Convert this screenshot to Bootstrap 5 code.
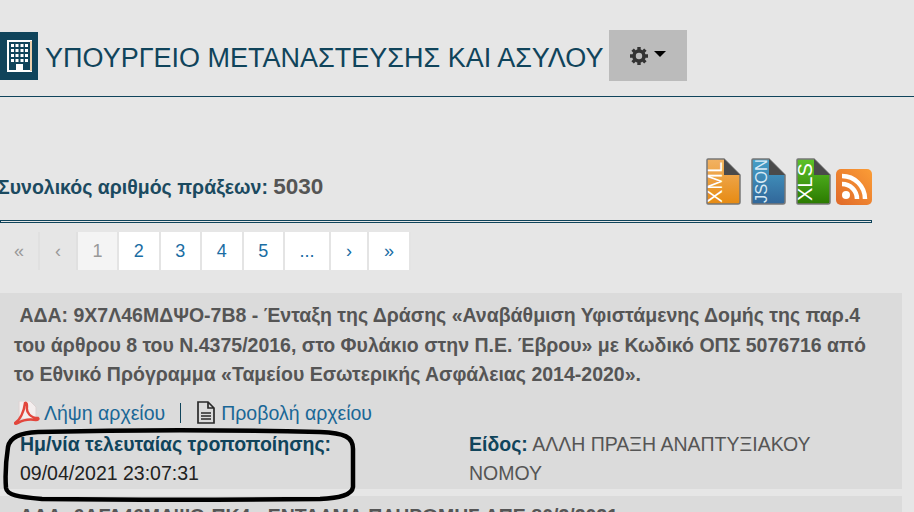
<!DOCTYPE html>
<html lang="el">

<head>
  <meta charset="UTF-8">
  <meta name="viewport" content="width=device-width, initial-scale=1.0">
  <title>Υπουργείο Μετανάστευσης και Ασύλου</title>
  <link href="https://cdn.jsdelivr.net/npm/bootstrap@5.3.0/dist/css/bootstrap.min.css" rel="stylesheet">
  <style>
    html, body {
      height: 512px;
      overflow: hidden;
    }

    body {
      background: #e6e6e6;
      font-family: "Liberation Sans", Arial, sans-serif;
      color: #555;
    }

    .site-head {
      height: 97px;
      padding-top: 32px;
      border-bottom: 1px solid #0f445c;
    }

    .logo-box {
      width: 38px;
      height: 48px;
      background: #10445b;
    }

    .site-title {
      color: #10445b;
      font-size: 27px;
      line-height: 52px;
      margin: 0 6px 0 7px;
      font-weight: 400;
      white-space: nowrap;
    }

    .gear-btn {
      width: 78px;
      height: 51px;
      margin-top: -2px;
      background: #bbb;
      gap: 6px;
    }

    .gear-caret {
      width: 0;
      height: 0;
      border-left: 6px solid transparent;
      border-right: 6px solid transparent;
      border-top: 6px solid #000;
      margin-top: -4px;
    }

    .stats-row {
      width: 872px;
      height: 123px;
      padding-bottom: 15px;
    }

    .stats-label {
      font-size: 19.500px;
      font-weight: 700;
      margin-left: -2px;
      margin-bottom: 6px;
      line-height: 24px;
      color: #1b4a60;
    }

    .stats-label b {
      color: #555;
      font-size: 22.500px;
    }

    .export-icons {
      gap: 10px;
    }

    .rss-icon {
      margin-left: -5px;
    }

    .stats-rule {
      width: 872px;
      height: 3px;
      border: 1px solid #10445b;
    }

    .pager {
      margin: 9px 0 0;
      padding: 0;
      list-style: none;
    }

    .pager .page-link {
      height: 38px;
      line-height: 38px;
      margin-left: 0;
      padding: 0;
      text-align: center;
      font-size: 18px;
      color: #1a6da3;
      background: #fff;
      border: 0;
      border-right: 2px solid #e4e4e4;
      border-radius: 0 !important;
    }

    .pager .page-item:not(:first-child) .page-link {
      margin-left: 0;
    }

    .pager .page-item.disabled .page-link {
      background: #e6e6e6;
      color: #999;
      border-right-color: #e0e0e0;
    }

    .pager .page-item.active .page-link {
      background: #f4f4f4;
      color: #999;
    }

    .pg-1 { width: 40px; }
    .pg-2 { width: 38px; }
    .pg-3 { width: 41.500px; }
    .pg-4 { width: 46px; }
    .pg-5 { width: 41px; }
    .pg-6 { width: 42px; }

    .act-card {
      width: 902px;
      margin-top: 23px;
      background: #dbdbdb;
      padding: 8px 0 0 14px;
      height: 196px;
    }

    .act-next {
      width: 902px;
      margin-top: 7px;
      background: #dbdbdb;
      height: 30px;
      padding: 6px 0 0 14px;
    }

    .act-title {
      font-size: 19.500px;
      line-height: 29.500px;
      font-weight: 700;
      color: #555;
      margin: 0;
      white-space: nowrap;
    }

    .file-links {
      margin-top: 11px;
      height: 24px;
      font-size: 19.500px;
      line-height: 24px;
    }

    .file-links a {
      color: #1a6796;
      text-decoration: none;
    }

    .file-links .file-open {
      margin-left: 5px;
    }

    .file-sep {
      width: 1px;
      height: 20px;
      background: #10445b;
      margin: 0 15px;
    }

    .meta-row {
      margin-top: 5px;
      font-size: 19.500px;
      line-height: 29.500px;
    }

    .meta-left {
      width: 455px;
      padding-left: 6px;
      color: #222;
    }

    .meta-right {
      width: 370px;
      color: #555;
    }

    .meta-key {
      color: #10445b;
      font-weight: 700;
    }

    .ink-ring {
      position: absolute;
      left: 0;
      top: 425px;
    }
  </style>
</head>

<body>
  <header class="site-head d-flex align-items-start">
    <div class="logo-box d-flex align-items-center justify-content-center">
      <svg width="25" height="32" viewBox="0 0 25 32">
        <rect x="1" y="1" width="23" height="30" fill="#10445b" stroke="#fff" stroke-width="2"/>
        <path d="M24 1v30" stroke="#d9a05b" stroke-width="1"/>
        <g fill="#fff">
          <rect x="4" y="4" width="3" height="3"/><rect x="8.500" y="4" width="3" height="3"/><rect x="13.500" y="4" width="3" height="3"/><rect x="18" y="4" width="3" height="3"/>
          <rect x="4" y="9" width="3" height="3"/><rect x="8.500" y="9" width="3" height="3"/><rect x="13.500" y="9" width="3" height="3"/><rect x="18" y="9" width="3" height="3"/>
          <rect x="4" y="14" width="3" height="3"/><rect x="8.500" y="14" width="3" height="3"/><rect x="13.500" y="14" width="3" height="3"/><rect x="18" y="14" width="3" height="3"/>
          <rect x="4" y="19" width="3" height="3"/><rect x="8.500" y="19" width="3" height="3"/><rect x="13.500" y="19" width="3" height="3"/><rect x="18" y="19" width="3" height="3"/>
          <rect x="9" y="24" width="7" height="7"/>
        </g>
      </svg>
    </div>
    <h1 class="site-title">ΥΠΟΥΡΓΕΙΟ ΜΕΤΑΝΑΣΤΕΥΣΗΣ ΚΑΙ ΑΣΥΛΟΥ</h1>
    <div class="gear-btn d-flex align-items-center justify-content-center">
      <svg width="18" height="18" viewBox="0 0 18 18">
        <circle cx="9" cy="9" r="5" fill="none" stroke="#333" stroke-width="3.6"/>
        <g stroke="#333" stroke-width="3.4">
          <path d="M9 0v3M9 15v3M0 9h3M15 9h3M2.600 2.600l2.100 2.100M13.300 13.300l2.100 2.100M15.400 2.600l-2.100 2.100M4.700 13.300l-2.100 2.100"/>
        </g>
      </svg>
      <span class="gear-caret"></span>
    </div>
  </header>

  <section class="stats-row d-flex justify-content-between align-items-end">
    <div class="stats-label">Συνολικός αριθμός πράξεων: <b>5030</b></div>
    <div class="export-icons d-flex align-items-end">
      <svg width="35" height="47" viewBox="0 0 35 47">
        <defs><linearGradient id="gx" x1="0" y1="0" x2="0" y2="1"><stop offset="0" stop-color="#f2b263"/><stop offset="1" stop-color="#e68a12"/></linearGradient></defs>
        <path d="M2 1h16l16 16v27a2 2 0 0 1-2 2H2a1 1 0 0 1-1-1V2a1 1 0 0 1 1-1z" fill="url(#gx)" stroke="#777" stroke-width="1.500"/>
        <path d="M18 1l16 16H18z" fill="#4a4a4a"/>
        <text transform="translate(16 45) rotate(-90)" font-family="Liberation Sans" font-size="20" fill="#fff">XML</text>
      </svg>
      <svg width="35" height="47" viewBox="0 0 35 47">
        <defs><linearGradient id="gj" x1="0" y1="0" x2="0" y2="1"><stop offset="0" stop-color="#46a0c8"/><stop offset="1" stop-color="#316699"/></linearGradient></defs>
        <path d="M2 1h16l16 16v27a2 2 0 0 1-2 2H2a1 1 0 0 1-1-1V2a1 1 0 0 1 1-1z" fill="url(#gj)" stroke="#777" stroke-width="1.500"/>
        <path d="M18 1l16 16H18z" fill="#4a4a4a"/>
        <text transform="translate(16 45) rotate(-90)" font-family="Liberation Sans" font-size="16.500" fill="#d8eaf5">JSON</text>
      </svg>
      <svg width="35" height="47" viewBox="0 0 35 47">
        <defs><linearGradient id="gl" x1="0" y1="0" x2="0" y2="1"><stop offset="0" stop-color="#5cc229"/><stop offset="1" stop-color="#2b7a00"/></linearGradient></defs>
        <path d="M2 1h16l16 16v27a2 2 0 0 1-2 2H2a1 1 0 0 1-1-1V2a1 1 0 0 1 1-1z" fill="url(#gl)" stroke="#777" stroke-width="1.500"/>
        <path d="M18 1l16 16H18z" fill="#4a4a4a"/>
        <text transform="translate(16 43) rotate(-90)" font-family="Liberation Sans" font-size="20" fill="#fff">XLS</text>
      </svg>
      <svg class="rss-icon" width="36" height="36" viewBox="0 0 36 36">
        <defs><linearGradient id="gr" x1="1" y1="0" x2="0" y2="1"><stop offset="0" stop-color="#fb9d36"/><stop offset="1" stop-color="#e0692a"/></linearGradient></defs>
        <rect width="36" height="36" rx="5" fill="url(#gr)"/>
        <circle cx="10" cy="26" r="4" fill="#fff"/>
        <path d="M6 15a15 15 0 0 1 15 15M6 7a23 23 0 0 1 23 23" fill="none" stroke="#fff" stroke-width="4.500"/>
      </svg>
    </div>
  </section>
  <div class="stats-rule"></div>

  <ul class="pagination pager">
    <li class="page-item disabled"><a class="page-link pg-1" href="#">«</a></li>
    <li class="page-item disabled"><a class="page-link pg-2" href="#">‹</a></li>
    <li class="page-item active"><a class="page-link pg-5" href="#">1</a></li>
    <li class="page-item"><a class="page-link pg-3" href="#">2</a></li>
    <li class="page-item"><a class="page-link pg-3" href="#">3</a></li>
    <li class="page-item"><a class="page-link pg-3" href="#">4</a></li>
    <li class="page-item"><a class="page-link pg-3" href="#">5</a></li>
    <li class="page-item"><a class="page-link pg-4" href="#">...</a></li>
    <li class="page-item"><a class="page-link pg-2" href="#">›</a></li>
    <li class="page-item"><a class="page-link pg-6" href="#">»</a></li>
  </ul>

  <article class="act-card">
    <p class="act-title">&nbsp;ΑΔΑ: 9Χ7Λ46ΜΔΨΟ-7Β8 - Ένταξη της Δράσης «Αναβάθμιση Υφιστάμενης Δομής της παρ.4<br>του άρθρου 8 του Ν.4375/2016, στο Φυλάκιο στην Π.Ε. Έβρου» με Κωδικό ΟΠΣ 5076716 από<br>το Εθνικό Πρόγραμμα «Ταμείου Εσωτερικής Ασφάλειας 2014-2020».</p>
    <div class="file-links d-flex align-items-center">
      <svg width="26" height="24" viewBox="0 0 26 24">
        <path d="M5 0h11l6 6v12H5z" fill="#f4eeee" stroke="#dcd2d2" stroke-width="1"/>
        <path d="M1 22c5-3 9-11 10-20 2-1 2 2 2 4-1 6 4 11 11 11 1 1 0 2-2 2-6-1-13 0-18 3-2 1-3 1-3 0z" fill="none" stroke="#e2463c" stroke-width="2.400"/>
      </svg>
      <a href="#" class="ms-1">Λήψη αρχείου</a>
      <span class="file-sep"></span>
      <svg width="20" height="23" viewBox="0 0 20 23">
        <path d="M2 1h10l6 6v15H2zM12 1v6h6M5 12h10M5 15h10M5 18h10" fill="none" stroke="#2a2a2a" stroke-width="1.700"/>
      </svg>
      <a href="#" class="file-open">Προβολή αρχείου</a>
    </div>
    <div class="meta-row d-flex">
      <div class="meta-left"><span class="meta-key">Ημ/νία τελευταίας τροποποίησης:</span><br>09/04/2021 23:07:31</div>
      <div class="meta-right"><span class="meta-key">Είδος:</span> ΑΛΛΗ ΠΡΑΞΗ ΑΝΑΠΤΥΞΙΑΚΟΥ ΝΟΜΟΥ</div>
    </div>
  </article>
  <article class="act-next">
    <p class="act-title">&nbsp;ΑΔΑ: 6ΑΓΔ46ΜΔΨΟ-ΠΚ4 - ΕΝΤΑΛΜΑ ΠΛΗΡΩΜΗΣ ΑΠΕ 80/3/2021</p>
  </article>

  <svg class="ink-ring" width="360" height="80" viewBox="0 0 360 80">
    <path d="M38 7C120 5 240 5 320 7 345 8 353 12 353 24L353 62C352 70 340 73 320 74 230 75 120 75 42 74 18 72 7 70 6 63 5 50 6 35 8 22 10 12 20 8 38 7z" fill="none" stroke="#000" stroke-width="4.500"/>
  </svg>

  <script src="https://cdn.jsdelivr.net/npm/bootstrap@5.3.0/dist/js/bootstrap.bundle.min.js"></script>
</body>

</html>
